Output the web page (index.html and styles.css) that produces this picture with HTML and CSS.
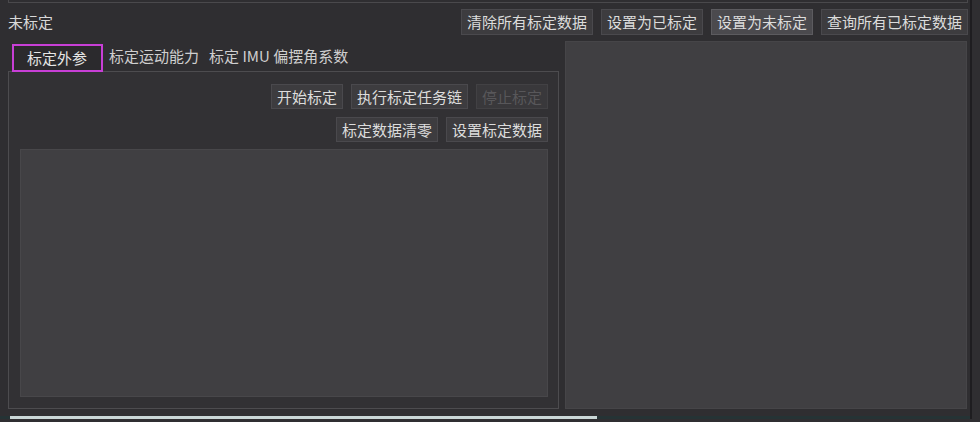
FILE: index.html
```html
<!DOCTYPE html>
<html lang="zh-CN">
  <head>
    <meta charset="UTF-8" />
    <meta name="viewport" content="width=device-width, initial-scale=1.0" />
    <title>标定</title>
    <link rel="stylesheet" href="styles.css">
  </head>
  <body>
    <div class="window">
      <div class="topBox"></div>

      <div class="header">
        <div class="title">未标定</div>
        <div class="actions">
          <button class="btn">清除所有标定数据</button>
          <button class="btn">设置为已标定</button>
          <button class="btn hover">设置为未标定</button>
          <button class="btn">查询所有已标定数据</button>
        </div>
      </div>

      <div class="main">
        <div class="leftPanel">
          <div class="tabs">
            <div class="tab active">标定外参</div>
            <div class="tab">标定运动能力</div>
            <div class="tab">标定 IMU 偏摆角系数</div>
          </div>
          <div class="pane">
            <div class="btnRow">
              <button class="btn">开始标定</button>
              <button class="btn">执行标定任务链</button>
              <button class="btn" disabled>停止标定</button>
            </div>
            <div class="btnRow">
              <button class="btn">标定数据清零</button>
              <button class="btn">设置标定数据</button>
            </div>
            <div class="plotBox"></div>
          </div>
        </div>
        <div class="rightPanel"></div>
      </div>

      <div class="statusBar"><div class="statusFill"></div></div>
    </div>
  </body>
</html>
```

FILE: styles.css
```css
body {
  margin: 0;
  background-color: #2f2e31;
  color: #d9d9d9;
  font-family: "Noto Sans CJK SC", "Noto Sans", sans-serif;
  font-size: 15px;
  overflow: hidden;
}
.window {
  width: 970px;
  height: 419px;
  border-right: 2px solid #1e1d20;
  display: flex;
  flex-direction: column;
}
.topBox {
  height: 2px;
  margin: 0 2px 0 8px;
  border: 1px solid #4a494c;
  border-top: none;
}
.header {
  display: flex;
  align-items: center;
  justify-content: space-between;
  margin-top: 6px;
  padding: 0 2px 0 8px;
}
.title {
  line-height: 26px;
}
.actions {
  display: flex;
  gap: 8px;
}
.btn {
  height: 26px;
  padding: 0 5px;
  font-family: inherit;
  font-size: 15px;
  line-height: 24px;
  color: #dcdcdc;
  background-color: #3d3c3f;
  border: 1px solid #4a494d;
  border-radius: 0;
}
.btn.hover {
  background-color: #4b4a4e;
  border-color: #5c5b5f;
}
.btn:disabled {
  color: #58575a;
  background-color: #39383b;
  border-color: #424144;
}
.main {
  display: flex;
  gap: 6px;
  margin-top: 6px;
  padding: 0 3px 0 8px;
  height: 368px;
}
.leftPanel {
  width: 551px;
  display: flex;
  flex-direction: column;
}
.tabs {
  display: flex;
  align-items: center;
  height: 30px;
  position: relative;
  z-index: 1;
}
.tab {
  padding: 0 5px;
  color: #cfcfcf;
  line-height: 26px;
}
.tab.active {
  margin: 3px 1px 0 4px;
  padding: 0 14px 0 13px;
  height: 24px;
  border: 2px solid #c83fd6;
  background-color: #2b2a2d;
  color: #e6e6e6;
  line-height: 24px;
}
.pane {
  flex: 1;
  border: 1px solid #4d4c4f;
  background-color: #323134;
  padding: 12px 10px 11px 11px;
  display: flex;
  flex-direction: column;
  gap: 8px;
}
.btnRow {
  display: flex;
  justify-content: flex-end;
  gap: 8px;
}
.btnRow .btn {
  height: 25px;
  line-height: 23px;
}
.plotBox {
  flex: 1;
  margin-top: -1px;
  background-color: #403f42;
  border: 1px solid #48474a;
}
.rightPanel {
  flex: 1;
  background-color: #403f42;
  border: 1px solid #464548;
}
.statusBar {
  margin-top: auto;
  height: 3px;
  background-color: #253335;
}
.statusFill {
  margin-left: 10px;
  width: 587px;
  height: 3px;
  background-color: #c9d6d6;
}
```
